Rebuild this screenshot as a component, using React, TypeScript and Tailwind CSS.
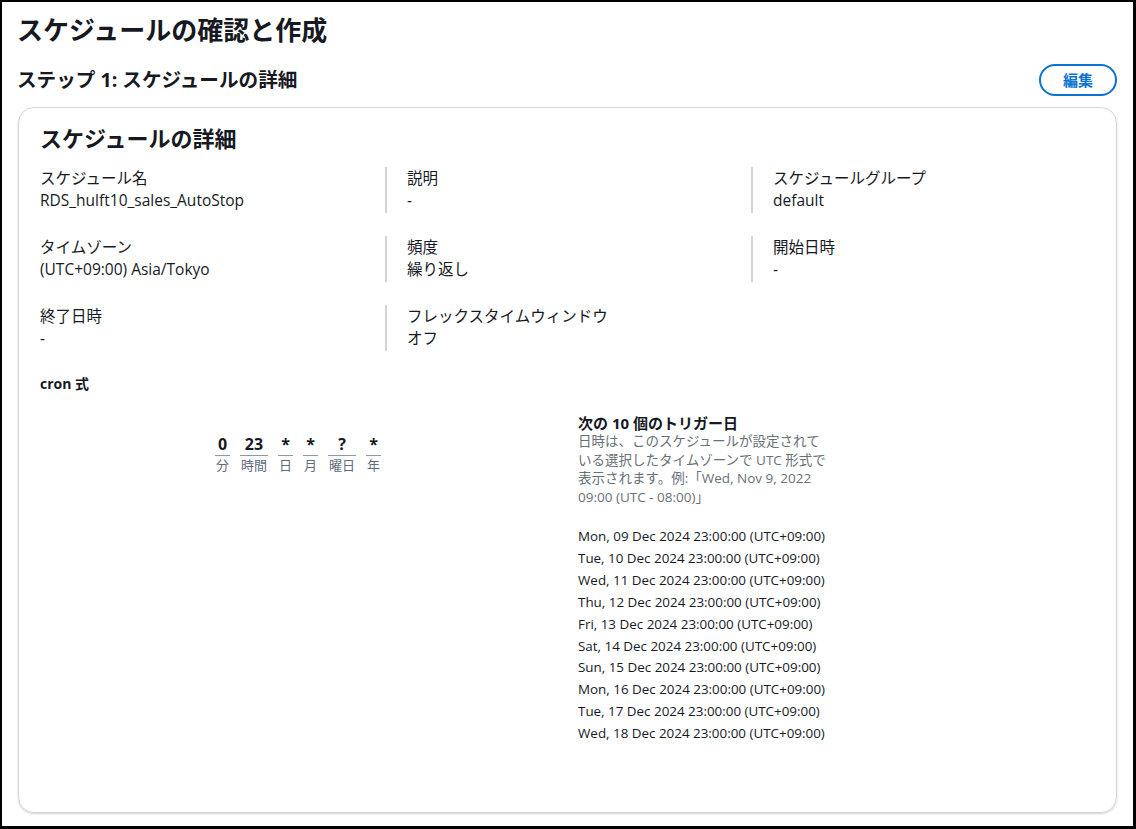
import React from "react";

const font = {
  fontFamily: '"Open Sans", "Noto Sans CJK JP", sans-serif',
};

type Item = { label: string; value: string };

const rows: Item[][] = [
  [
    { label: "スケジュール名", value: "RDS_hulft10_sales_AutoStop" },
    { label: "説明", value: "-" },
    { label: "スケジュールグループ", value: "default" },
  ],
  [
    { label: "タイムゾーン", value: "(UTC+09:00) Asia/Tokyo" },
    { label: "頻度", value: "繰り返し" },
    { label: "開始日時", value: "-" },
  ],
  [
    { label: "終了日時", value: "-" },
    { label: "フレックスタイムウィンドウ", value: "オフ" },
  ],
];

const cron = [
  { v: "0", l: "分" },
  { v: "23", l: "時間" },
  { v: "*", l: "日" },
  { v: "*", l: "月" },
  { v: "?", l: "曜日" },
  { v: "*", l: "年" },
];

const dates = [
  "Mon, 09 Dec 2024 23:00:00 (UTC+09:00)",
  "Tue, 10 Dec 2024 23:00:00 (UTC+09:00)",
  "Wed, 11 Dec 2024 23:00:00 (UTC+09:00)",
  "Thu, 12 Dec 2024 23:00:00 (UTC+09:00)",
  "Fri, 13 Dec 2024 23:00:00 (UTC+09:00)",
  "Sat, 14 Dec 2024 23:00:00 (UTC+09:00)",
  "Sun, 15 Dec 2024 23:00:00 (UTC+09:00)",
  "Mon, 16 Dec 2024 23:00:00 (UTC+09:00)",
  "Tue, 17 Dec 2024 23:00:00 (UTC+09:00)",
  "Wed, 18 Dec 2024 23:00:00 (UTC+09:00)",
];

function Field({ item, idx }: { item: Item; idx: number }) {
  return (
    <div
      className={
        idx === 0
          ? "h-[46px]"
          : "h-[46px] border-l-2 border-[#d1d5db] pl-[20px]"
      }
    >
      <div className="text-[15.5px] leading-[22px] text-[#16191f] whitespace-nowrap">
        {item.label}
      </div>
      <div className="text-[15.5px] leading-[22px] text-[#16191f] whitespace-nowrap">
        {item.value}
      </div>
    </div>
  );
}

export default function App() {
  return (
    <div
      style={font}
      className="w-[1136px] h-[829px] bg-white border-l-2 border-t-2 border-r-[3px] border-b-[3px] border-black pl-[15px] pr-[16px] overflow-hidden"
    >
      <div className="mt-[11px] text-[26px] leading-[34px] font-bold text-[#16191f] whitespace-nowrap">
        スケジュールの確認と作成
      </div>
      <div className="mt-[17px] h-[32px] flex items-center justify-between">
        <div className="text-[19.6px] font-bold text-[#16191f] leading-[26px] whitespace-nowrap">
          ステップ 1: スケジュールの詳細
        </div>
        <button className="w-[78px] h-[32px] rounded-full border-2 border-[#0972d3] text-[#0972d3] font-bold text-[15px] leading-none flex items-center justify-center">
          編集
        </button>
      </div>
      <div className="mt-[11px] ml-[1px] h-[706px] rounded-[16px] border border-[#d5d6da] shadow-[0_1px_2px_rgba(0,0,0,0.18)] px-[21px] pt-[15px]">
        <div className="text-[22px] leading-[30px] font-bold text-[#16191f] whitespace-nowrap">
          スケジュールの詳細
        </div>
        <div className="mt-[14px] flex flex-col gap-[23px]">
          {rows.map((row, ri) => (
            <div key={ri} className="grid grid-cols-[345px_366px_1fr]">
              {row.map((item, i) => (
                <Field key={i} item={item} idx={i} />
              ))}
            </div>
          ))}
        </div>
        <div className="mt-[22px] text-[14px] leading-[22px] font-bold text-[#16191f]">
          cron 式
        </div>
        <div className="mt-[20px] grid grid-cols-[516px_1fr] gap-[22px]">
          <div className="pt-[18px] flex justify-center">
            <div className="flex gap-[10px]">
              {cron.map((c, i) => (
                <div key={i} className="flex flex-col items-stretch">
                  <div className="text-[16px] leading-[22px] font-bold text-[#16191f] text-center">
                    {c.v}
                  </div>
                  <div className="border-t border-[#8d99a8] text-[13px] leading-[18px] text-[#5f6b7a] text-center px-[1px]">
                    {c.l}
                  </div>
                </div>
              ))}
            </div>
          </div>
          <div>
            <div className="text-[15px] leading-[17px] font-bold text-[#16191f] whitespace-nowrap">
              次の 10 個のトリガー日
            </div>
            <div className="text-[13.5px] leading-[18.5px] text-[#687078] whitespace-nowrap">
              <div>日時は、このスケジュールが設定されて</div>
              <div>いる選択したタイムゾーンで UTC 形式で</div>
              <div>表示されます。例:「Wed, Nov 9, 2022</div>
              <div>09:00 (UTC - 08:00)」</div>
            </div>
            <div className="mt-[20px]">
              {dates.map((d, i) => (
                <div
                  key={i}
                  className="text-[13.4px] leading-[21.9px] text-[#16191f] whitespace-nowrap"
                >
                  {d}
                </div>
              ))}
            </div>
          </div>
        </div>
      </div>
    </div>
  );
}
